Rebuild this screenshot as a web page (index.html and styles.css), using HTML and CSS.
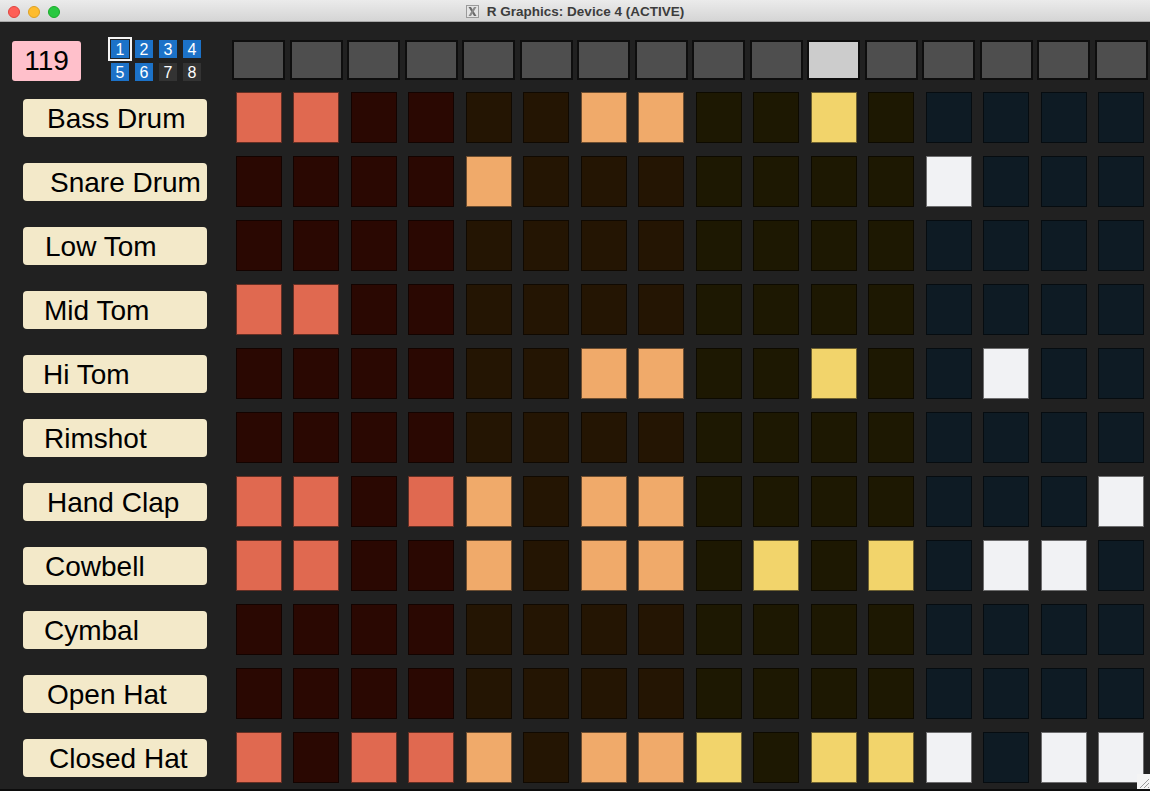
FILE: index.html
```html
<!DOCTYPE html>
<html lang="en">

<head>
    <meta charset="UTF-8">
    <meta name="viewport" content="width=device-width, initial-scale=1.0">
    <title>R Graphics: Device 4 (ACTIVE)</title>
    <link rel="stylesheet" href="styles.css">
</head>

<body>
    <div class="window">
        <div class="titlebar">
            <div class="lights">
                <span class="light red"></span>
                <span class="light yellow"></span>
                <span class="light green"></span>
            </div>
            <div class="title">
                <svg class="x11" width="13" height="13" viewBox="0 0 13 13">
                    <rect x="0.5" y="0.5" width="12" height="12" fill="#e4e4e4" stroke="#9a9a9a"/>
                    <path d="M2.5 2 L5 2 L10.5 11 L8 11 Z" fill="#6a6a6a"/>
                    <path d="M8 2 L10.5 2 L5 11 L2.5 11 Z" fill="#8a8a8a"/>
                </svg>
                <span>R Graphics: Device 4 (ACTIVE)</span>
            </div>
        </div>

        <div class="content">
            <div class="header">
                <div class="header-left">
                    <div class="tempo">119</div>
                    <div class="patterns">
                        <span class="pat used selected">1</span>
                        <span class="pat used">2</span>
                        <span class="pat used">3</span>
                        <span class="pat used">4</span>
                        <span class="pat used">5</span>
                        <span class="pat used">6</span>
                        <span class="pat">7</span>
                        <span class="pat">8</span>
                    </div>
                </div>
                <div class="steps" id="steps"></div>
            </div>

            <div class="rows" id="rows"></div>
        </div>

        <div class="grip">
            <svg width="13" height="15" viewBox="0 0 13 15">
                <path d="M3 14 L12 5 M7 14 L12 9 M11 14 L12 13" stroke="#9a9a9a" stroke-width="1"/>
            </svg>
        </div>
    </div>

    <script>
        // instrument name, label text offset, 16 steps
        const tracks = [
            ["Bass Drum", 24, "1100001100100000"],
            ["Snare Drum", 27, "0000100000001000"],
            ["Low Tom", 22, "0000000000000000"],
            ["Mid Tom", 21, "1100000000000000"],
            ["Hi Tom", 20, "0000001100100100"],
            ["Rimshot", 21, "0000000000000000"],
            ["Hand Clap", 24, "1101101100000001"],
            ["Cowbell", 22, "1100101101010110"],
            ["Cymbal", 21, "0000000000000000"],
            ["Open Hat", 24, "0000000000000000"],
            ["Closed Hat", 26, "1011101110111011"]
        ];
        const currentStep = 10;

        // Step indicator buttons along the top
        const steps = document.getElementById("steps");
        for (let i = 0; i < 16; i++) {
            const slot = document.createElement("div");
            slot.className = "slot";
            const btn = document.createElement("div");
            btn.className = i === currentStep ? "step-btn current" : "step-btn";
            slot.appendChild(btn);
            steps.appendChild(slot);
        }

        // One row per instrument
        const rows = document.getElementById("rows");
        tracks.forEach(([name, offset, pattern]) => {
            const row = document.createElement("div");
            row.className = "row";

            const labelCell = document.createElement("div");
            labelCell.className = "label-cell";
            const label = document.createElement("div");
            label.className = "label";
            label.style.paddingLeft = offset + "px";
            label.textContent = name;
            labelCell.appendChild(label);
            row.appendChild(labelCell);

            const cells = document.createElement("div");
            cells.className = "cells";
            pattern.split("").forEach((v, i) => {
                const slot = document.createElement("div");
                slot.className = "slot";
                const cell = document.createElement("div");
                cell.className = "cell g" + (Math.floor(i / 4) + 1) + (v === "1" ? " on" : "");
                slot.appendChild(cell);
                cells.appendChild(slot);
            });
            row.appendChild(cells);

            rows.appendChild(row);
        });
    </script>
</body>

</html>
```

FILE: styles.css
```css
body {
    margin: 0;
    padding: 0;
    font-family: "Liberation Sans", Arial, sans-serif;
    background-color: #212121;
    overflow: hidden;
}

.window {
    position: relative;
    width: 1150px;
    height: 791px;
    background-color: #212121;
    box-sizing: border-box;
    border-bottom: 2px solid #0c0c0c;
}

/* Title bar */
.titlebar {
    position: relative;
    height: 22px;
    box-sizing: border-box;
    background: linear-gradient(#ebebeb, #d5d5d5);
    border-bottom: 1px solid #a8a8a8;
    display: flex;
    align-items: center;
    justify-content: center;
}

.lights {
    position: absolute;
    left: 8px;
    top: 6px;
    display: flex;
    gap: 8px;
}

.light {
    width: 12px;
    height: 12px;
    border-radius: 50%;
    box-sizing: border-box;
}

.light.red {
    background-color: #fe5f57;
    border: 1px solid #e0443e;
}

.light.yellow {
    background-color: #febc2e;
    border: 1px solid #dea123;
}

.light.green {
    background-color: #28c840;
    border: 1px solid #1aab29;
}

.title {
    display: flex;
    align-items: center;
    gap: 8px;
    font-size: 13.5px;
    font-weight: bold;
    color: #3c3c3c;
    margin-top: 1px;
}

/* Main area */
.content {
    padding-top: 18px;
}

.header {
    display: flex;
    height: 40px;
    margin-bottom: 12px;
}

.header-left {
    width: 230px;
    display: flex;
}

.tempo {
    width: 69px;
    height: 40px;
    margin-left: 12px;
    margin-top: 1px;
    background-color: #ffc0cb;
    border-radius: 3px;
    font-size: 28px;
    line-height: 40px;
    text-align: center;
    color: #000;
}

.patterns {
    display: grid;
    grid-template-columns: repeat(4, 18px);
    grid-auto-rows: 18px;
    column-gap: 6px;
    row-gap: 5px;
    margin-left: 30px;
}

.pat {
    background-color: #333333;
    color: #fff;
    font-size: 16px;
    line-height: 19px;
    text-align: center;
}

.pat.used {
    background-color: #1c72c8;
}

.pat.selected {
    outline: 2px solid #f4f4f4;
    outline-offset: 1px;
}

.steps,
.cells {
    display: grid;
    grid-template-columns: repeat(16, 57.5px);
}

.slot {
    display: flex;
    justify-content: center;
}

.step-btn {
    width: 53px;
    height: 40px;
    box-sizing: border-box;
    background-color: #4e4e4e;
    border: 2px solid #0e0e0e;
}

.step-btn.current {
    background-color: #cccccc;
}

/* Instrument rows */
.rows {
    display: flex;
    flex-direction: column;
    gap: 13px;
}

.row {
    display: flex;
    height: 51px;
}

.label-cell {
    width: 230px;
    display: flex;
    align-items: center;
}

.label {
    width: 184px;
    height: 38px;
    margin-left: 23px;
    box-sizing: border-box;
    background-color: #f3e9c9;
    border-radius: 4px;
    font-size: 28px;
    line-height: 40px;
    color: #000;
    white-space: nowrap;
}

.cell {
    width: 46px;
    height: 51px;
    box-sizing: border-box;
    border: 1px solid rgba(0, 0, 0, 0.55);
}

.cell.g1 { background-color: #2a0802; }
.cell.g1.on { background-color: #e06950; }
.cell.g2 { background-color: #241503; }
.cell.g2.on { background-color: #f0aa6a; }
.cell.g3 { background-color: #1d1802; }
.cell.g3.on { background-color: #f2d46b; }
.cell.g4 { background-color: #0e1b24; }
.cell.g4.on { background-color: #f1f2f4; }

.grip {
    position: absolute;
    right: 0;
    bottom: 0;
    width: 13px;
    height: 15px;
    background-color: #f4f4f4;
}
```
